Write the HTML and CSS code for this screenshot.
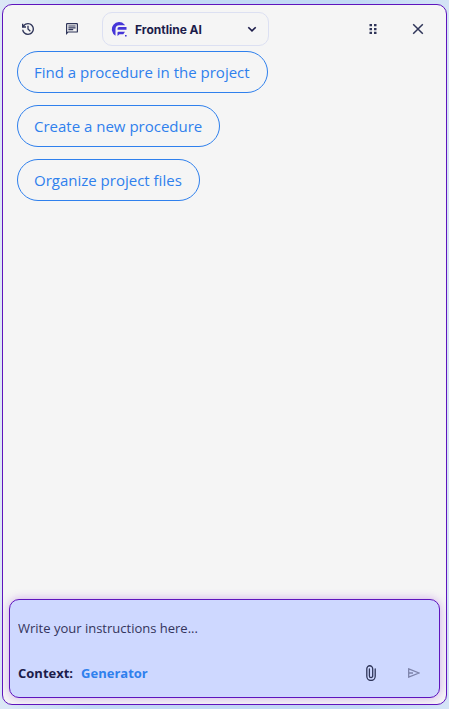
FILE: index.html
```
<!DOCTYPE html>
<html lang="en">
<head>
  <meta charset="UTF-8" />
  <meta name="viewport" content="width=device-width, initial-scale=1.0" />
  <title>Frontline AI</title>
  <link rel="stylesheet" href="styles.css">
</head>
<body>
  <main class="panel">
    <header class="toolbar">
      <button class="icon-btn" type="button" aria-label="History">
        <svg width="16" height="16" viewBox="0 0 24 24" fill="currentColor"><path d="M12 21q-3.450 0-6.010-2.290T3.050 13H5.100q.350 2.600 2.310 4.300T12 19q2.930 0 4.960-2.040T19 12t-2.040-4.960T12 5q-1.720 0-3.220.8T6.250 8H9v2H3V4h2v2.350q1.270-1.600 3.110-2.470T12 3q1.880 0 3.510.71t2.850 1.930 1.930 2.850T21 12t-.71 3.510-1.930 2.850-2.850 1.930T12 21m2.800-4.800L11 12.400V7h2v4.600l3.200 3.200z"/></svg>
      </button>
      <button class="icon-btn" type="button" aria-label="Conversations">
        <svg width="12" height="12" viewBox="2 2 20 20" fill="currentColor"><path d="M4 4v13.170L5.170 16H20V4zm0-2h16a2 2 0 0 1 2 2v12a2 2 0 0 1-2 2H6l-4 4V4a2 2 0 0 1 2-2m2 10h8v2H6zm0-3h12v2H6zm0-3h12v2H6z"/></svg>
      </button>
      <div class="agent">
        <svg class="agent-logo" width="16" height="16" viewBox="0 0 16 16" fill="currentColor">
          <path d="M13.500 3.400A7.300 7.300 0 1 0 4.500 14.700V8Q4.500 4.200 8.300 4.200h5.800z"/>
          <path d="M8 6h7.500v2.700H6.500V7.500Q6.500 6 8 6M7.500 10.700h6.500L12.300 13.200H8.500L6.500 15v-3.300q0-1 1-1M14 14h1.600v1.600H14z"/>
        </svg>
        <select class="agent-select" aria-label="Agent">
          <option>Frontline AI</option>
        </select>
        <svg class="agent-arrow" width="10" height="10" viewBox="0 0 10 10" fill="none" stroke="currentColor" stroke-width="1.600"><path d="M1.300 3.200L5 6.900l3.700-3.700"/></svg>
      </div>
      <div class="window-actions">
        <button class="icon-btn" type="button" aria-label="Move panel">
          <svg width="8" height="12" viewBox="0 0 8 12" fill="currentColor"><path d="M.5 1H3v2.300H.5zM5 1h2.500v2.300H5zM.5 4.900H3v2.300H.5zM5 4.900h2.500v2.300H5zM.5 8.800H3v2.300H.5zM5 8.800h2.500v2.300H5z"/></svg>
        </button>
        <button class="icon-btn" type="button" aria-label="Close">
          <svg width="12" height="12" viewBox="0 0 12 12" fill="none" stroke="currentColor" stroke-width="1.500"><path d="M1.200 1.200l9.600 9.600M10.800 1.200l-9.600 9.600"/></svg>
        </button>
      </div>
    </header>

    <div class="suggestions">
      <button class="suggestion" type="button">Find a procedure in the project</button>
      <button class="suggestion" type="button">Create a new procedure</button>
      <button class="suggestion" type="button">Organize project files</button>
    </div>

    <form class="composer">
      <textarea class="prompt" rows="1" aria-label="Instructions" placeholder="Write your instructions here..."></textarea>
      <div class="composer-footer">
        <span class="context-label">Context:</span>
        <a class="context-link" href="#">Generator</a>
        <div class="composer-actions">
          <button class="icon-btn" type="button" aria-label="Attach a file">
            <svg width="10" height="16" viewBox="0 0 10 16" fill="none" stroke="currentColor" stroke-width="1.300" stroke-linecap="round"><path d="M9.200 4v7.300a4.200 4.200 0 0 1-8.400 0V3.700a2.900 2.900 0 0 1 5.900 0v7.200a1.600 1.600 0 0 1-3.300 0V4"/></svg>
          </button>
          <button class="icon-btn send" type="submit" aria-label="Send">
            <svg width="12" height="10" viewBox="0 0 12 10" fill="none" stroke="currentColor" stroke-width="1.300"><path d="M.7.900L11 5 .7 9.100zM.7 5H5"/></svg>
          </button>
        </div>
      </div>
    </form>
  </main>
</body>
</html>
```
FILE: styles.css
```
* {
  box-sizing: border-box;
}
body {
  margin: 0;
  min-height: 100vh;
  padding: 4px 2px;
  display: flex;
  background: linear-gradient(to right, #dce8f6, #c2daf5 20%, #c2daf5 80%, #d4e4f6);
  font-family: "Segoe UI", "Open Sans", sans-serif;
  color: #1c1c4a;
}
button, select, textarea {
  font: inherit;
  color: inherit;
  background: none;
  border: none;
  margin: 0;
  padding: 0;
}
.panel {
  flex: 1;
  min-width: 0;
  display: flex;
  flex-direction: column;
  background: #f5f5f5;
  border: 1px solid #5f14bd;
  border-radius: 10px;
}
.toolbar {
  display: flex;
  align-items: center;
  gap: 16px;
  padding: 7px 14px 5px 11px;
}
.icon-btn {
  width: 28px;
  height: 28px;
  display: flex;
  align-items: center;
  justify-content: center;
  color: #2f3559;
  cursor: pointer;
}
.agent {
  width: 167px;
  height: 34px;
  display: flex;
  align-items: center;
  gap: 8px;
  padding: 0 11px 0 8px;
  border: 1px solid #dce0f2;
  border-radius: 10px;
}
.agent-logo {
  flex: none;
  color: #4636d8;
}
.agent-select {
  flex: 1;
  min-width: 0;
  appearance: none;
  font-family: Inter, sans-serif;
  font-size: 12px;
  font-weight: 700;
}
.agent-arrow {
  flex: none;
}
.window-actions {
  display: flex;
  gap: 17px;
  margin-left: auto;
}
.suggestions {
  flex: 1;
  display: flex;
  flex-direction: column;
  align-items: flex-start;
  gap: 12px;
  padding: 0 14px;
}
.suggestion {
  height: 42px;
  padding: 0 17px 0 16px;
  border: 1px solid #2f80ed;
  border-radius: 21px;
  font-size: 15px;
  color: #2f80ed;
  cursor: pointer;
}
.composer {
  margin: 6px;
  padding: 18px 11px 10px 8px;
  background: #ced8ff;
  border: 1px solid #5f14bd;
  border-radius: 10px;
  box-shadow: 0 0 10px rgba(150, 60, 220, 0.4);
}
.prompt {
  display: block;
  width: 100%;
  height: 20px;
  margin-bottom: 21px;
  font-size: 13px;
  line-height: 20px;
  resize: none;
  outline: none;
  overflow: hidden;
}
.prompt::placeholder {
  color: #34345c;
}
.composer-footer {
  display: flex;
  align-items: center;
  gap: 8px;
  font-size: 13px;
  font-weight: 700;
}
.context-link {
  color: #2f80ed;
  text-decoration: none;
}
.composer-actions {
  display: flex;
  gap: 15px;
  margin-left: auto;
}
.send {
  color: #7d83aa;
}
```
